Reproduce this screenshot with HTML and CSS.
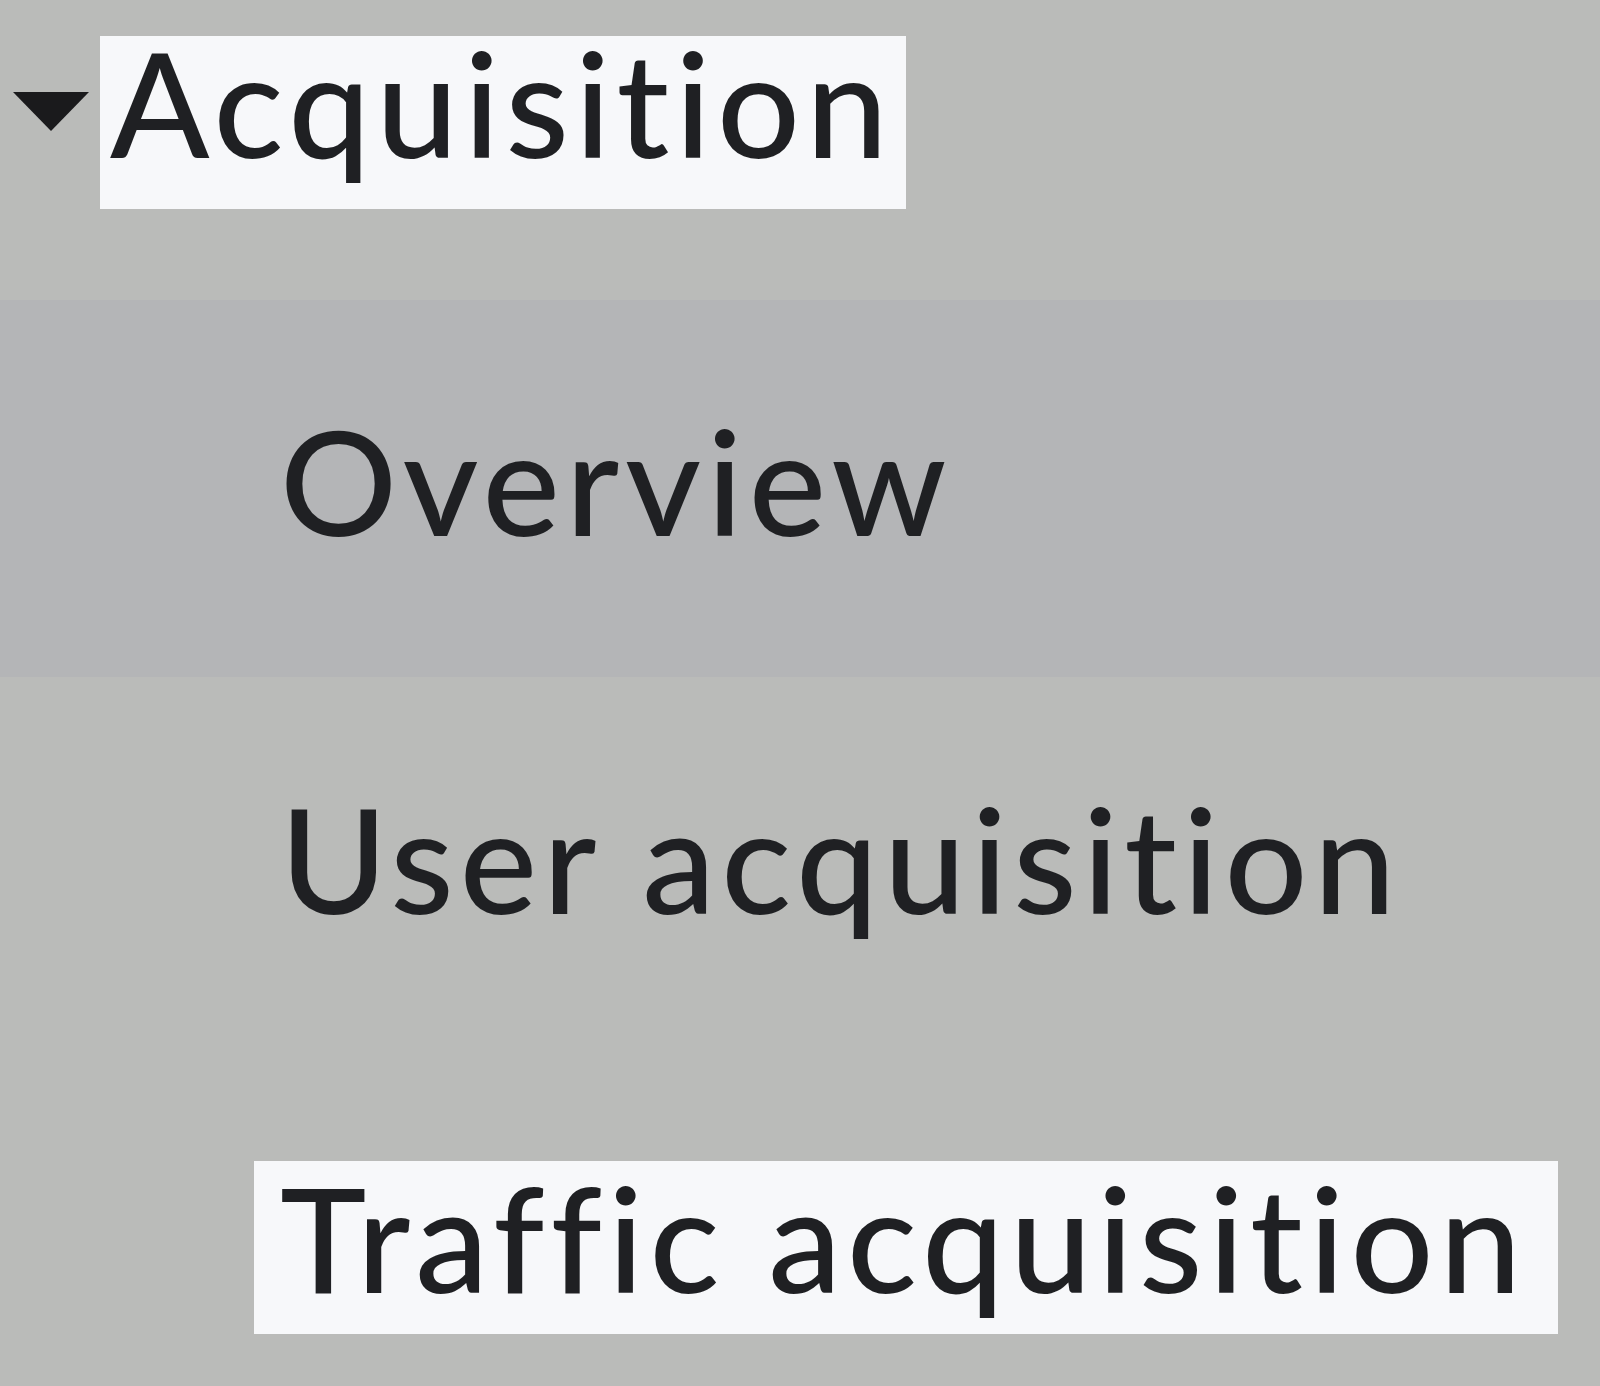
FILE: index.html
```html
<!DOCTYPE html>
<html lang="en">
<head>
 <meta charset="UTF-8">
 <meta name="viewport" content="width=device-width, initial-scale=1.0">
 <title>Reports - Acquisition</title>
 <link rel="stylesheet" href="styles.css">
</head>
<body>
 <nav class="menu">
 <div class="group-head">
 <svg class="caret" width="76" height="39" viewBox="0 0 76 39">
 <polygon points="0,0 76,0 38,39" fill="#1a1a1c"/>
 </svg>
 <span class="group-title">Acquisition</span>
 </div>
 <ul class="items">
 <li class="item item-hover">Overview</li>
 <li class="item item-user">User acquisition</li>
 <li class="item item-focus"><span class="focus-box">Traffic acquisition</span></li>
 </ul>
 </nav>
</body>
</html>
```

FILE: styles.css
```css
body {
margin: 0;
background-color: #babbb9;
font-family: 'Lato', 'Liberation Sans', sans-serif;
color: #1f2023;
}
.menu {
font-size: 146px;
font-weight: 500;
letter-spacing: 6px;
font-variant-ligatures: none;
}
.group-head {
display: flex;
align-items: flex-start;
padding-top: 36px;
}
.caret {
margin: 56px 11px 0 13px;
flex-shrink: 0;
}
.group-title {
display: block;
box-sizing: border-box;
width: 806px;
height: 173px;
padding-left: 10px;
line-height: 131px;
background-color: #f7f8fa;
}
.items {
list-style: none;
margin: 91px 0 0 0;
padding: 0;
}
.item {
line-height: 146px;
padding-left: 280px;
}
.item-hover {
height: 377px;
box-sizing: border-box;
padding-top: 107px;
background-color: #b4b5b7;
}
.item-user {
height: 484px;
box-sizing: border-box;
padding-top: 108px;
}
.item-focus {
padding-left: 254px;
}
.focus-box {
display: block;
box-sizing: border-box;
width: 1304px;
height: 173px;
padding-left: 26px;
line-height: 151px;
background-color: #f7f8fa;
}
```
